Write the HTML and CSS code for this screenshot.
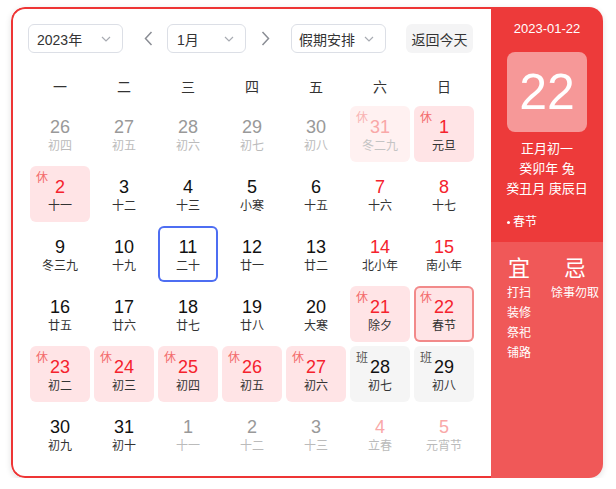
FILE: index.html
```html
<!DOCTYPE html>
<html lang="zh-CN">
<head>
<meta charset="utf-8">
<link rel="stylesheet" href="styles.css">
</head>
<body>
<div class="card">
  <div class="main">
    <div class="toolbar">
      <div class="select sel-year"><span>2023年</span><svg class="chev" width="10" height="6" viewBox="0 0 10 6"><path d="M1 1l4 4 4-4" fill="none" stroke="#a8abb2" stroke-width="1.2"/></svg></div>
      <div class="arrow prev"><svg width="9" height="15" viewBox="0 0 9 15"><path d="M7.5 1L1.5 7.5 7.5 14" fill="none" stroke="#8a8d94" stroke-width="1.5"/></svg></div>
      <div class="select sel-month"><span>1月</span><svg class="chev" width="10" height="6" viewBox="0 0 10 6"><path d="M1 1l4 4 4-4" fill="none" stroke="#a8abb2" stroke-width="1.2"/></svg></div>
      <div class="arrow next"><svg width="9" height="15" viewBox="0 0 9 15"><path d="M1.5 1L7.5 7.5 1.5 14" fill="none" stroke="#8a8d94" stroke-width="1.5"/></svg></div>
      <div class="select sel-hol"><span>假期安排</span><svg class="chev" width="10" height="6" viewBox="0 0 10 6"><path d="M1 1l4 4 4-4" fill="none" stroke="#a8abb2" stroke-width="1.2"/></svg></div>
      <div class="today-btn">返回今天</div>
    </div>
    <div class="weekdays">
      <div>一</div><div>二</div><div>三</div><div>四</div><div>五</div><div>六</div><div>日</div>
    </div>
    <div class="grid">
      <div class="cell other"><div class="num">26</div><div class="lunar">初四</div></div>
      <div class="cell other"><div class="num">27</div><div class="lunar">初五</div></div>
      <div class="cell other"><div class="num">28</div><div class="lunar">初六</div></div>
      <div class="cell other"><div class="num">29</div><div class="lunar">初七</div></div>
      <div class="cell other"><div class="num">30</div><div class="lunar">初八</div></div>
      <div class="cell other hol-faded"><span class="tag">休</span><div class="num">31</div><div class="lunar">冬二九</div></div>
      <div class="cell hol"><span class="tag">休</span><div class="num red">1</div><div class="lunar">元旦</div></div>

      <div class="cell hol"><span class="tag">休</span><div class="num red">2</div><div class="lunar">十一</div></div>
      <div class="cell"><div class="num">3</div><div class="lunar">十二</div></div>
      <div class="cell"><div class="num">4</div><div class="lunar">十三</div></div>
      <div class="cell"><div class="num">5</div><div class="lunar">小寒</div></div>
      <div class="cell"><div class="num">6</div><div class="lunar">十五</div></div>
      <div class="cell"><div class="num red">7</div><div class="lunar">十六</div></div>
      <div class="cell"><div class="num red">8</div><div class="lunar">十七</div></div>

      <div class="cell"><div class="num">9</div><div class="lunar">冬三九</div></div>
      <div class="cell"><div class="num">10</div><div class="lunar">十九</div></div>
      <div class="cell today"><div class="num">11</div><div class="lunar">二十</div></div>
      <div class="cell"><div class="num">12</div><div class="lunar">廿一</div></div>
      <div class="cell"><div class="num">13</div><div class="lunar">廿二</div></div>
      <div class="cell"><div class="num red">14</div><div class="lunar">北小年</div></div>
      <div class="cell"><div class="num red">15</div><div class="lunar">南小年</div></div>

      <div class="cell"><div class="num">16</div><div class="lunar">廿五</div></div>
      <div class="cell"><div class="num">17</div><div class="lunar">廿六</div></div>
      <div class="cell"><div class="num">18</div><div class="lunar">廿七</div></div>
      <div class="cell"><div class="num">19</div><div class="lunar">廿八</div></div>
      <div class="cell"><div class="num">20</div><div class="lunar">大寒</div></div>
      <div class="cell hol"><span class="tag">休</span><div class="num red">21</div><div class="lunar">除夕</div></div>
      <div class="cell hol selected"><span class="tag">休</span><div class="num red">22</div><div class="lunar">春节</div></div>

      <div class="cell hol"><span class="tag">休</span><div class="num red">23</div><div class="lunar">初二</div></div>
      <div class="cell hol"><span class="tag">休</span><div class="num red">24</div><div class="lunar">初三</div></div>
      <div class="cell hol"><span class="tag">休</span><div class="num red">25</div><div class="lunar">初四</div></div>
      <div class="cell hol"><span class="tag">休</span><div class="num red">26</div><div class="lunar">初五</div></div>
      <div class="cell hol"><span class="tag">休</span><div class="num red">27</div><div class="lunar">初六</div></div>
      <div class="cell work"><span class="tag">班</span><div class="num">28</div><div class="lunar">初七</div></div>
      <div class="cell work"><span class="tag">班</span><div class="num">29</div><div class="lunar">初八</div></div>

      <div class="cell"><div class="num">30</div><div class="lunar">初九</div></div>
      <div class="cell"><div class="num">31</div><div class="lunar">初十</div></div>
      <div class="cell other"><div class="num">1</div><div class="lunar">十一</div></div>
      <div class="cell other"><div class="num">2</div><div class="lunar">十二</div></div>
      <div class="cell other"><div class="num">3</div><div class="lunar">十三</div></div>
      <div class="cell other weekend"><div class="num">4</div><div class="lunar">立春</div></div>
      <div class="cell other weekend"><div class="num">5</div><div class="lunar">元宵节</div></div>
    </div>
  </div>
  <div class="side">
    <div class="side-top">
      <div class="side-date">2023-01-22</div>
      <div class="big-day">22</div>
      <div class="lunar-info">
        <div>正月初一</div>
        <div>癸卯年 兔</div>
        <div>癸丑月 庚辰日</div>
      </div>
      <div class="festival"><span class="dot"></span>春节</div>
    </div>
    <div class="side-bottom">
      <div class="col col-yi">
        <div class="col-title">宜</div>
        <div class="items"><div>打扫</div><div>装修</div><div>祭祀</div><div>铺路</div></div>
      </div>
      <div class="col col-ji">
        <div class="col-title">忌</div>
        <div class="items"><div>馀事勿取</div></div>
      </div>
    </div>
  </div>
</div>
</body>
</html>
```

FILE: styles.css
```css
body {
  margin: 0;
  padding: 7px 0 0 11px;
  background: #fff;
  font-family: "Liberation Sans", "Noto Sans CJK SC", sans-serif;
}

.card {
  display: flex;
  width: 592px;
  height: 471px;
  border-radius: 14px;
  overflow: hidden;
  box-shadow: 0 2px 6px rgba(0, 0, 0, 0.12);
}

.main {
  width: 480px;
  box-sizing: border-box;
  border: 2px solid #ee3535;
  border-right: none;
  border-radius: 14px 0 0 14px;
  padding: 15px 0 0 15px;
  background: #fff;
}

.toolbar {
  display: flex;
  align-items: center;
  height: 29px;
}

.select {
  box-sizing: border-box;
  height: 29px;
  border: 1px solid #dcdfe6;
  border-radius: 6px;
  display: flex;
  align-items: center;
  justify-content: space-between;
  padding: 0 11px 0 8px;
  font-size: 14px;
  color: #333;
}

.sel-year { width: 95px; }
.sel-month { width: 79px; padding-left: 9px; }
.sel-hol { width: 95px; padding-left: 7px; }

.arrow {
  width: 20px;
  height: 29px;
  display: flex;
  align-items: center;
  justify-content: center;
}

.prev { margin: 0 9px 0 15px; }
.next { margin: 0 16px 0 9px; }

.today-btn {
  margin-left: 20px;
  width: 67px;
  height: 29px;
  background: #f4f4f5;
  border-radius: 6px;
  display: flex;
  align-items: center;
  justify-content: center;
  font-size: 14px;
  color: #333;
}

.weekdays {
  display: grid;
  grid-template-columns: repeat(7, 60px);
  column-gap: 4px;
  margin: 20px 0 0 2px;
  height: 28px;
  line-height: 28px;
  text-align: center;
  font-size: 14px;
  color: #333;
}

.grid {
  display: grid;
  grid-template-columns: repeat(7, 60px);
  grid-auto-rows: 56px;
  gap: 4px;
  margin: 5px 0 0 2px;
}

.cell {
  position: relative;
  box-sizing: border-box;
  border-radius: 6px;
  padding-top: 10px;
  text-align: center;
}

.num {
  font-size: 18px;
  line-height: 22px;
  color: #111;
}

.num.red { color: #f5222d; }

.lunar {
  font-size: 12px;
  line-height: 16px;
  color: #333;
}

.tag {
  position: absolute;
  top: 4px;
  left: 6px;
  font-size: 12px;
  line-height: 16px;
  color: #f36b6b;
}

.other .num { color: #999; }
.other .lunar { color: #bbb; }

.other.weekend .num { color: #f9a8a8; }

.hol { background: #ffe4e6; }

.hol-faded { background: #fff1f1; }
.hol-faded .tag { color: #f9b4b4; }
.hol-faded .num { color: #f9a8a8; }
.hol-faded .lunar { color: #c4c4c4; }

.work { background: #f5f5f5; }
.work .tag { color: #555; }

.today { box-shadow: inset 0 0 0 2px #4e6ef2; }
.selected { box-shadow: inset 0 0 0 2px #f28a8a; }

.side {
  width: 112px;
  display: flex;
  flex-direction: column;
  color: #fff;
}

.side-top {
  height: 235px;
  box-sizing: border-box;
  background: #ed3a3a;
  display: flex;
  flex-direction: column;
  align-items: center;
  padding-top: 12px;
}

.side-date {
  font-size: 13px;
  line-height: 20px;
}

.big-day {
  margin-top: 13px;
  width: 80px;
  height: 80px;
  border-radius: 8px;
  background: rgba(255, 255, 255, 0.48);
  display: flex;
  align-items: center;
  justify-content: center;
  font-size: 50px;
}

.lunar-info {
  margin-top: 7px;
  font-size: 13px;
  line-height: 20px;
  text-align: center;
}

.festival {
  align-self: flex-start;
  margin: 14px 0 0 16px;
  font-size: 12px;
  line-height: 18px;
  display: flex;
  align-items: center;
}

.dot {
  width: 3px;
  height: 3px;
  background: #fff;
  border-radius: 50%;
  margin-right: 3px;
}

.side-bottom {
  flex: 1;
  background: #f05858;
  padding: 14px 0 0 16px;
  display: flex;
  gap: 20px;
}

.col { text-align: center; }
.col-yi { width: 24px; }
.col-ji { width: 48px; }

.col-title {
  font-size: 22px;
  line-height: 26px;
}

.items {
  margin-top: 1px;
  font-size: 12px;
  line-height: 20px;
}
```
